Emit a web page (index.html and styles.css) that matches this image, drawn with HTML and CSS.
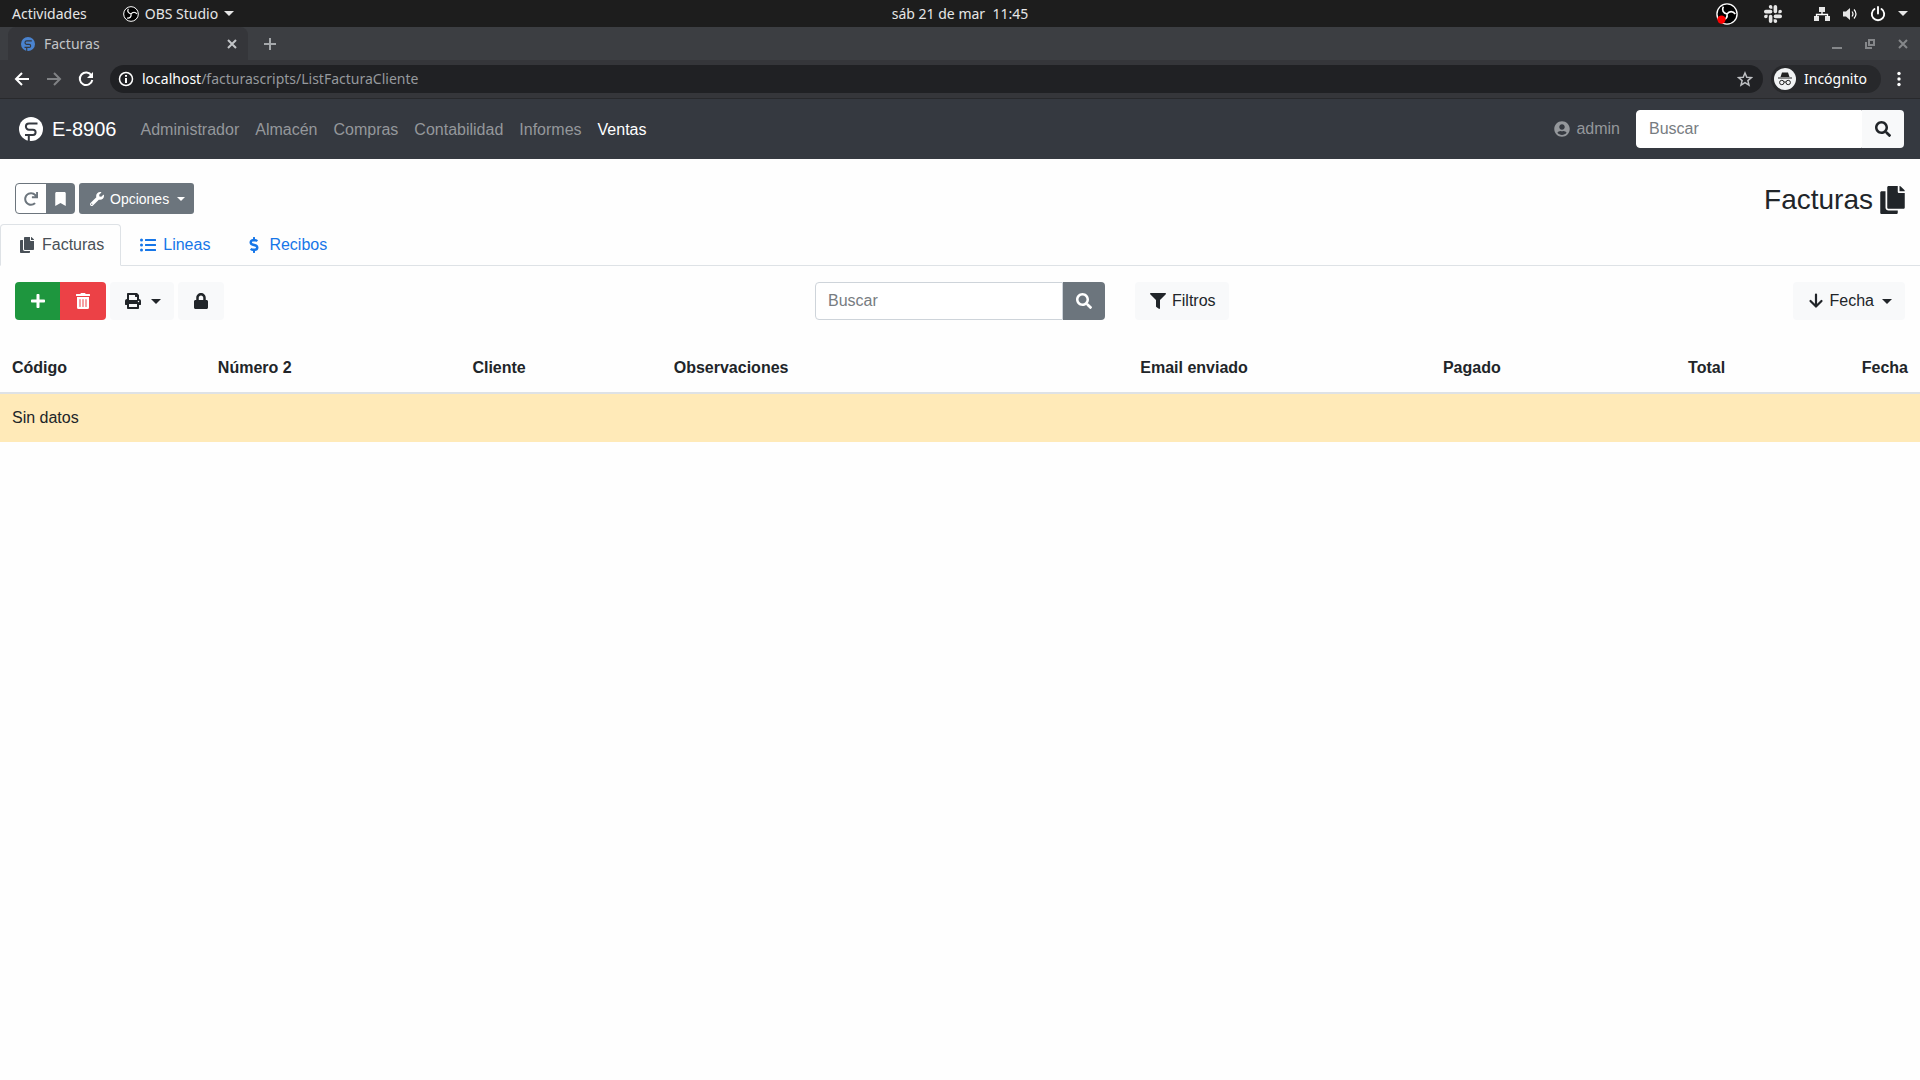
FILE: index.html
```html
<!DOCTYPE html>
<html lang="es">
<head>
<meta charset="utf-8">
<title>Facturas</title>
<link rel="stylesheet" href="styles.css">
</head>
<body>
<svg class="sprite" aria-hidden="true">
  <symbol id="copy" viewBox="0 0 448 512"><path d="M320 448v40c0 13.255-10.745 24-24 24H24c-13.255 0-24-10.745-24-24V120c0-13.255 10.745-24 24-24h72v296c0 30.879 25.121 56 56 56h168zm0-344V0H152c-13.255 0-24 10.745-24 24v368c0 13.255 10.745 24 24 24h272c13.255 0 24-10.745 24-24V128H344c-13.2 0-24-10.8-24-24zm120.971-31.029L375.029 7.029A24 24 0 0 0 358.059 0H352v96h96v-6.059a24 24 0 0 0-7.029-16.97z"/></symbol>
  <symbol id="search" viewBox="0 0 512 512"><path d="M505 442.7L405.3 343c-4.5-4.5-10.6-7-17-7H372c27.6-35.3 44-79.7 44-128C416 93.1 322.9 0 208 0S0 93.1 0 208s93.1 208 208 208c48.3 0 92.7-16.4 128-44v16.3c0 6.4 2.5 12.5 7 17l99.7 99.7c9.4 9.4 24.6 9.4 33.9 0l28.3-28.3c9.4-9.4 9.4-24.6.1-34zM208 336c-70.7 0-128-57.2-128-128 0-70.7 57.2-128 128-128 70.7 0 128 57.2 128 128 0 70.7-57.2 128-128 128z"/></symbol>
  <symbol id="mark" viewBox="0 0 24 24"><circle cx="12" cy="12" r="12"/><path class="mark-line" d="M18.500 6.500H10A3.100 3.100 0 0 0 10 12.700H14A2.600 2.600 0 0 1 14 17.900H6M9.800 18V24" fill="none"/></symbol>
  <symbol id="obs" viewBox="0 0 24 24"><circle cx="12" cy="12" r="11" fill="#000" stroke="#fff" stroke-width="1.500"/><path d="M12 12C8 11 6 8 8 4M12 12C14.500 8.500 18.500 8.500 21 12M12 12C13 16 10 19 6 18" fill="none" stroke="#fff" stroke-width="1.800"/></symbol>
</svg>

<header class="desktop-bar">
  <div class="desktop-side">
    <span>Actividades</span>
    <span class="app-menu"><svg class="i16"><use href="#obs"/></svg>OBS Studio<i class="caret"></i></span>
  </div>
  <span class="clock">sáb 21 de mar&nbsp; 11:45</span>
  <div class="desktop-side tray">
    <svg class="i22" viewBox="0 0 24 24"><use href="#obs"/><circle cx="6" cy="18" r="4.500" fill="#f00"/></svg>
    <svg class="slack" viewBox="0 0 54 54"><path id="slack-arm" d="M19.712.133a5.381 5.381 0 0 0-5.376 5.387 5.381 5.381 0 0 0 5.376 5.386h5.376V5.520A5.381 5.381 0 0 0 19.712.133m0 14.365H5.376A5.381 5.381 0 0 0 0 19.884a5.381 5.381 0 0 0 5.376 5.387h14.336a5.381 5.381 0 0 0 5.376-5.387 5.381 5.381 0 0 0-5.376-5.386"/><use href="#slack-arm" transform="rotate(90 27 27)"/><use href="#slack-arm" transform="rotate(180 27 27)"/><use href="#slack-arm" transform="rotate(270 27 27)"/></svg>
    <svg class="i16" viewBox="0 0 16 16" fill="#fff"><path d="M5 1h6v5H5zM0 10h5v5H0zM11 10h5v5h-5z"/><path d="M8 6v2.500M2.500 11V8.500h11V11" fill="none" stroke="#fff" stroke-width="1.300"/></svg>
    <svg class="i16" viewBox="0 0 16 16" fill="#fff"><path d="M1 5.500h3L8 2v12L4 10.500H1z"/><path d="M10 5.500q2 2.500 0 5M12 3.500q4 4.500 0 9" fill="none" stroke="#fff" stroke-width="1.200"/></svg>
    <svg class="i16" viewBox="0 0 16 16"><path d="M8 1v6.500M4.500 3a6.200 6.200 0 1 0 7 0" fill="none" stroke="#fff" stroke-width="1.900" stroke-linecap="round"/></svg>
    <i class="caret"></i>
  </div>
</header>

<div class="tab-strip">
  <div class="browser-tab">
    <svg class="favicon"><use href="#mark"/></svg>
    <span class="tab-name">Facturas</span>
    <svg class="i10" viewBox="0 0 10 10"><path d="M1 1l8 8M9 1L1 9"/></svg>
  </div>
  <svg class="i12" viewBox="0 0 12 12"><path d="M6 0v12M0 6h12"/></svg>
  <div class="window-buttons">
    <svg class="i10" viewBox="0 0 10 10"><path d="M0 9h10"/></svg>
    <svg class="i10" viewBox="0 0 10 10"><path d="M4 1h5v5H4zM1 3v6h6"/></svg>
    <svg class="i10" viewBox="0 0 10 10"><path d="M1 1l8 8M9 1L1 9"/></svg>
  </div>
</div>

<div class="toolbar">
  <svg class="i16" viewBox="0 0 16 16"><path d="M15 8H2M8 2L2 8l6 6"/></svg>
  <svg class="i16 off" viewBox="0 0 16 16"><path d="M1 8h13M8 2l6 6-6 6"/></svg>
  <svg class="i16" viewBox="0 0 16 16"><path d="M13.500 4.500A6.300 6.300 0 1 0 14.300 9"/><path d="M15 1v6H9z" fill="#fff" stroke="none"/></svg>
  <div class="address">
    <svg class="i16" viewBox="0 0 16 16"><circle cx="8" cy="8" r="6.500" stroke-width="1.500"/><path d="M8 7v5M8 4v1.700"/></svg>
    <span class="url"><b>localhost</b>/facturascripts/ListFacturaCliente</span>
    <svg class="i16 star" viewBox="0 0 16 16"><path d="M8 2l1.800 4.200 4.600.4-3.500 3 1.100 4.500L8 11.700l-4 2.400 1.100-4.500-3.500-3 4.600-.4z"/></svg>
  </div>
  <div class="incognito">
    <svg class="i22" viewBox="0 0 22 22"><circle cx="11" cy="11" r="11" fill="#f1f3f4" stroke="none"/><path d="M6.500 9L8 4.500h6L15.500 9zM4 9.500h14v1H4z" fill="#222" stroke="none"/><circle cx="7.800" cy="14.500" r="2.200"/><circle cx="14.200" cy="14.500" r="2.200"/><path d="M10 14h2"/></svg>
    Incógnito
  </div>
  <svg class="dots" viewBox="0 0 4 16"><circle cx="2" cy="2.500" r="1.700"/><circle cx="2" cy="8" r="1.700"/><circle cx="2" cy="13.500" r="1.700"/></svg>
</div>

<nav class="navbar">
  <a class="brand" href="#"><svg class="i24"><use href="#mark"/></svg>E-8906</a>
  <div class="nav-links">
    <a href="#">Administrador</a><a href="#">Almacén</a><a href="#">Compras</a><a href="#">Contabilidad</a><a href="#">Informes</a><a class="active" href="#">Ventas</a>
  </div>
  <a class="user" href="#"><svg class="i16" viewBox="0 0 496 512"><path d="M248 8C111 8 0 119 0 256s111 248 248 248 248-111 248-248S385 8 248 8zm0 96c48.600 0 88 39.400 88 88s-39.400 88-88 88-88-39.400-88-88 39.400-88 88-88zm0 344c-58.700 0-111.300-26.600-146.500-68.200 18.800-35.400 55.600-59.800 98.500-59.800 2.400 0 4.800.4 7.100 1.100 13 4.200 26.600 6.900 40.900 6.900 14.300 0 28-2.700 40.900-6.900 2.300-.7 4.700-1.100 7.100-1.100 42.900 0 79.700 24.400 98.500 59.800C359.300 421.400 306.700 448 248 448z"/></svg>admin</a>
  <form class="search-group nav-search">
    <input type="search" placeholder="Buscar" aria-label="Buscar en el menú">
    <button class="btn light" type="button" aria-label="Buscar"><svg class="i16"><use href="#search"/></svg></button>
  </form>
</nav>

<main>
  <div class="page-head">
    <div class="btn-group">
      <button class="btn small outline" type="button" aria-label="Recargar"><svg class="i14" viewBox="0 0 512 512"><path d="M500.330 0h-47.410a12 12 0 0 0-12 12.570l4 82.760A247.420 247.420 0 0 0 256 8C119.340 8 7.900 119.530 8 256.190 8.100 393.070 119.100 504 256 504a247.100 247.100 0 0 0 166.180-63.910 12 12 0 0 0 .48-17.430l-34-34a12 12 0 0 0-16.380-.55A176 176 0 1 1 402.100 157.800l-101.530-4.870a12 12 0 0 0-12.570 12v47.410a12 12 0 0 0 12 12h200.330a12 12 0 0 0 12-12V12a12 12 0 0 0-12-12z"/></svg></button><button class="btn small secondary" type="button" aria-label="Marcar"><svg class="bookmark" viewBox="0 0 384 512"><path d="M0 512V48C0 21.490 21.490 0 48 0h288c26.510 0 48 21.490 48 48v464L192 400 0 512z"/></svg></button>
    </div>
    <button class="btn small secondary" type="button"><svg class="small-icon" viewBox="0 0 512 512"><path d="M507.730 109.100c-2.240-9.030-13.540-12.090-20.120-5.510l-74.360 74.360-67.880-11.310-11.310-67.880 74.360-74.360c6.620-6.620 3.430-17.900-5.660-20.160-47.380-11.740-99.550.91-136.580 37.930-39.640 39.640-50.550 97.100-34.050 147.200L18.740 402.760c-24.990 24.990-24.990 65.510 0 90.500 24.990 24.990 65.510 24.990 90.500 0l213.210-213.210c50.120 16.710 107.470 5.680 147.370-34.220 37.070-37.070 49.700-89.320 37.910-136.730zM64 472c-13.250 0-24-10.750-24-24 0-13.260 10.750-24 24-24s24 10.740 24 24c0 13.250-10.750 24-24 24z"/></svg>Opciones<i class="caret"></i></button>
    <h1>Facturas<svg class="title-icon"><use href="#copy"/></svg></h1>
  </div>

  <div class="tabs">
    <a class="tab current" href="#"><svg class="icon"><use href="#copy"/></svg>Facturas</a>
    <a class="tab" href="#"><svg class="icon" viewBox="0 0 512 512"><path d="M48 48a48 48 0 1 0 48 48 48 48 0 0 0-48-48zm0 160a48 48 0 1 0 48 48 48 48 0 0 0-48-48zm0 160a48 48 0 1 0 48 48 48 48 0 0 0-48-48zm448 16H176a16 16 0 0 0-16 16v32a16 16 0 0 0 16 16h320a16 16 0 0 0 16-16v-32a16 16 0 0 0-16-16zm0-320H176a16 16 0 0 0-16 16v32a16 16 0 0 0 16 16h320a16 16 0 0 0 16-16V80a16 16 0 0 0-16-16zm0 160H176a16 16 0 0 0-16 16v32a16 16 0 0 0 16 16h320a16 16 0 0 0 16-16v-32a16 16 0 0 0-16-16z"/></svg>Lineas</a>
    <a class="tab" href="#"><svg class="icon" viewBox="0 0 288 512"><path d="M209.200 233.400l-108-31.600C88.700 198.200 80 186.500 80 173.500c0-16.300 13.200-29.500 29.500-29.500h66.300c12.200 0 24.200 3.700 34.200 10.500 6.100 4.100 14.300 3.100 19.500-2l34.800-34c7.100-6.900 6.100-18.400-1.800-24.500C238 74.800 207.400 64.100 176 64V16c0-8.800-7.200-16-16-16h-32c-8.800 0-16 7.200-16 16v48h-2.500C45.800 64-5.400 118.700.5 183.600c4.200 46.100 39.400 83.600 83.800 96.600l102.500 30c12.500 3.700 21.200 15.300 21.200 28.300 0 16.300-13.200 29.500-29.500 29.500h-66.300C100 368 88 364.300 78 357.500c-6.100-4.100-14.300-3.100-19.500 2l-34.800 34c-7.100 6.900-6.100 18.400 1.800 24.500 24.500 19.200 55.100 29.900 86.500 30v48c0 8.800 7.200 16 16 16h32c8.800 0 16-7.200 16-16v-48.200c46.600-.9 90.300-28.600 105.700-72.700 21.500-61.600-14.600-124.800-72.500-141.700z"/></svg>Recibos</a>
  </div>

  <div class="actions">
    <div class="actions-left">
      <div class="btn-group">
        <button class="btn success" type="button" aria-label="Nuevo"><svg class="icon" viewBox="0 0 448 512"><path d="M416 208H272V64c0-17.670-14.330-32-32-32h-32c-17.670 0-32 14.330-32 32v144H32c-17.670 0-32 14.330-32 32v32c0 17.670 14.330 32 32 32h144v144c0 17.670 14.330 32 32 32h32c17.670 0 32-14.330 32-32V304h144c17.670 0 32-14.330 32-32v-32c0-17.670-14.330-32-32-32z"/></svg></button><button class="btn danger" type="button" aria-label="Eliminar"><svg class="icon" viewBox="0 0 448 512"><path d="M32 464a48 48 0 0 0 48 48h288a48 48 0 0 0 48-48V128H32zm272-256a16 16 0 0 1 32 0v224a16 16 0 0 1-32 0zm-96 0a16 16 0 0 1 32 0v224a16 16 0 0 1-32 0zm-96 0a16 16 0 0 1 32 0v224a16 16 0 0 1-32 0zM432 32H312l-9.400-18.700A24 24 0 0 0 281.100 0H166.800a23.720 23.720 0 0 0-21.400 13.300L136 32H16A16 16 0 0 0 0 48v32a16 16 0 0 0 16 16h416a16 16 0 0 0 16-16V48a16 16 0 0 0-16-16z"/></svg></button>
      </div>
      <button class="btn light" type="button" aria-label="Imprimir"><svg class="icon" viewBox="0 0 512 512"><path d="M448 192V77.250c0-8.490-3.370-16.620-9.370-22.630L393.370 9.370c-6-6-14.140-9.370-22.630-9.370H96C78.330 0 64 14.330 64 32v160c-35.350 0-64 28.650-64 64v112c0 8.840 7.160 16 16 16h48v96c0 17.670 14.330 32 32 32h320c17.670 0 32-14.330 32-32v-96h48c8.840 0 16-7.160 16-16V256c0-35.350-28.650-64-64-64zm-64 256H128v-96h256v96zm0-224H128V64h192v48c0 8.840 7.160 16 16 16h48v96zm48 72c-13.250 0-24-10.750-24-24 0-13.260 10.750-24 24-24s24 10.740 24 24c0 13.250-10.750 24-24 24z"/></svg><i class="caret"></i></button>
      <button class="btn light" type="button" aria-label="Bloquear"><svg class="icon" viewBox="0 0 448 512"><path d="M400 224h-24v-72C376 68.200 307.800 0 224 0S72 68.200 72 152v72H48c-26.500 0-48 21.500-48 48v192c0 26.500 21.500 48 48 48h352c26.500 0 48-21.500 48-48V272c0-26.500-21.500-48-48-48zm-104 0H152v-72c0-39.700 32.300-72 72-72s72 32.300 72 72v72z"/></svg></button>
    </div>
    <form class="search-group">
      <input type="search" placeholder="Buscar" aria-label="Buscar facturas">
      <button class="btn secondary" type="button" aria-label="Buscar"><svg class="i16"><use href="#search"/></svg></button>
    </form>
    <div class="actions-right">
      <button class="btn light" type="button"><svg class="icon" viewBox="0 0 512 512"><path d="M487.976 0H24.028C2.710 0-8.047 25.866 7.058 40.971L192 225.941V432c0 7.831 3.821 15.170 10.237 19.662l80 55.980C298.020 518.690 320 507.493 320 487.980V225.941l184.947-184.970C520.021 25.896 509.338 0 487.976 0z"/></svg>Filtros</button>
      <button class="btn light" type="button"><svg class="icon" viewBox="0 0 14 16"><path d="M7 1.500v12M1.500 8L7 13.500 12.500 8" fill="none" stroke="currentColor" stroke-width="2.200" stroke-linecap="round"/></svg>Fecha<i class="caret"></i></button>
    </div>
  </div>

  <table>
    <thead>
      <tr><th>Código</th><th>Número 2</th><th>Cliente</th><th>Observaciones</th><th class="center">Email enviado</th><th class="center">Pagado</th><th class="right">Total</th><th class="right">Fecha</th></tr>
    </thead>
    <tbody>
      <tr class="warning"><td colspan="8">Sin datos</td></tr>
    </tbody>
  </table>
</main>
</body>
</html>
```

FILE: styles.css
```css
* { box-sizing: border-box; }

body {
  margin: 0;
  background: #fefefe;
  color: #212529;
  font: 16px/24px "Liberation Sans", Arial, sans-serif;
}

a { color: inherit; text-decoration: none; }
svg { flex: none; fill: currentColor; }
.sprite { position: absolute; width: 0; height: 0; }

.i10 { width: 10px; height: 10px; }
.i12 { width: 12px; height: 12px; }
.i14 { width: 14px; height: 14px; }
.i16 { width: 16px; height: 16px; }
.i22 { width: 22px; height: 22px; }
.i24 { width: 24px; height: 24px; }
.icon { width: 20px; height: 16px; }
.small-icon { width: 18px; height: 14px; }

.caret {
  border: 5px solid transparent;
  border-top-color: currentColor;
  border-bottom: 0;
}

/* Desktop bar */
.desktop-bar {
  display: flex;
  align-items: center;
  height: 27px;
  padding: 0 12px;
  background: #1d1d1d;
  color: #e6e6e6;
  font: 14px/20px "Noto Sans", sans-serif;
}
.desktop-side { display: flex; flex: 1; align-items: center; gap: 36px; }
.app-menu { display: flex; align-items: center; gap: 6px; }
.tray { justify-content: flex-end; gap: 12px; }
.slack { width: 18px; height: 18px; margin: 0 20px 0 14px; }

/* Browser chrome */
.tab-strip {
  display: flex;
  align-items: center;
  gap: 16px;
  height: 33px;
  padding: 0 12px 0 8px;
  background: #3c3e42;
  color: #a5a8ab;
  font: 14px/20px "Noto Sans", sans-serif;
}
.tab-strip path { fill: none; stroke: currentColor; stroke-width: 2; }
.browser-tab {
  display: flex;
  align-items: center;
  gap: 9px;
  width: 240px;
  height: 100%;
  padding: 0 11px 0 13px;
  border-radius: 8px 8px 0 0;
  background: #35363a;
  color: #c3c5c8;
}
.favicon { width: 14px; height: 14px; color: #4a83cf; }
.tab-name { flex: 1; }
.window-buttons { display: flex; gap: 23px; margin-left: auto; color: #85878a; }

.toolbar {
  display: flex;
  align-items: center;
  gap: 16px;
  height: 39px;
  padding: 0 19px 0 14px;
  border-bottom: 1px solid #28292c;
  background: #35363a;
  color: #fff;
  font: 14px/20px "Noto Sans", sans-serif;
}
.toolbar svg { fill: none; stroke: currentColor; stroke-width: 2; }
.toolbar .off { color: #808285; }
.address {
  display: flex;
  flex: 1;
  align-items: center;
  gap: 8px;
  height: 28px;
  padding: 0 10px 0 8px;
  border-radius: 14px;
  background: #202124;
}
.url { flex: 1; color: #96999d; }
.url b { color: #fff; font-weight: 400; }
.toolbar .star { color: #bfc1c4; stroke-width: 1.5; }
.incognito {
  display: flex;
  align-items: center;
  gap: 8px;
  height: 28px;
  margin-left: -8px;
  padding: 0 14px 0 3px;
  border-radius: 14px;
  background: #27282b;
}
.toolbar .incognito svg { stroke: #222; stroke-width: 1; }
.toolbar .dots { width: 4px; height: 16px; fill: #fff; stroke: none; }

/* Application navigation */
.navbar {
  display: flex;
  align-items: center;
  height: 60px;
  padding: 0 16px 0 19px;
  background: #353940;
  color: #94979b;
}
.brand { display: flex; align-items: center; gap: 9px; color: #fff; font-size: 20px; }
.mark-line { stroke: #353940; stroke-width: 2; }
.nav-links { display: flex; flex: 1; gap: 16px; padding: 2px 0 0 24px; }
.nav-links .active { color: #fff; }
.user { display: flex; align-items: center; gap: 6px; margin-right: 16px; }

/* Buttons and fields */
.btn {
  display: inline-flex;
  align-items: center;
  justify-content: center;
  gap: 4px;
  height: 38px;
  padding: 0 13px;
  border: 0;
  border-radius: 4px;
  color: #212529;
  font: inherit;
}
.btn .caret { margin-left: 4px; }
.small { height: 31px; padding: 0 9px; font-size: 14px; border-radius: 3px; }
.small .caret { border-width: 4px 4px 0; }
.light { background: #f8f9fa; }
.secondary { background: #6c757d; color: #fff; }
.outline { padding: 0 8px; border: 1px solid #6c757d; background: #fff; color: #6c757d; }
.success { background: #1e963e; color: #fff; }
.danger { background: #ec4146; color: #fff; }
.bookmark { width: 11px; height: 14px; }
.btn-group { display: flex; }
.btn-group .btn + .btn { margin-left: -1px; }
.btn-group .btn:first-child, .search-group input { border-radius: 4px 0 0 4px; }
.btn-group .btn:last-child, .search-group .btn { border-radius: 0 4px 4px 0; }

.search-group { display: flex; width: 290px; }
.search-group input {
  flex: 1;
  min-width: 0;
  height: 38px;
  padding: 0 12px;
  border: 1px solid #ced4da;
  background: #fff;
  font: inherit;
}
.search-group input::placeholder { color: #777c81; opacity: 1; }
.nav-search { width: 268px; }
.nav-search input { border-color: #fff; }

/* Page header */
.page-head { display: flex; align-items: flex-start; gap: 4px; padding: 24px 15px 7px; }
h1 {
  display: flex;
  align-items: center;
  gap: 7px;
  margin: 0 0 0 auto;
  font-size: 28px;
  font-weight: 400;
  line-height: 34px;
}
.title-icon { width: 25px; height: 28px; }

.tabs { display: flex; border-bottom: 1px solid #dee2e6; }
.tab {
  display: flex;
  align-items: center;
  gap: 5px;
  height: 42px;
  margin-bottom: -1px;
  padding: 0 16px;
  border: 1px solid transparent;
  color: #1676e8;
}
.current { border-color: #dee2e6 #dee2e6 #fefefe; border-radius: 4px 4px 0 0; color: #495057; }

/* List actions */
.actions {
  display: grid;
  grid-template-columns: 1fr auto 1fr;
  margin-bottom: 8px;
  padding: 16px 15px;
}
.actions-left, .actions-right { display: flex; gap: 4px; }
.actions-right { justify-content: space-between; padding-left: 30px; }

table { width: 100%; border-collapse: collapse; }
th, td { padding: 12px; text-align: left; }
th { border-bottom: 2px solid #dee2e6; }
.center { text-align: center; }
.right { text-align: right; }
.warning { background: #ffeab8; }
```
